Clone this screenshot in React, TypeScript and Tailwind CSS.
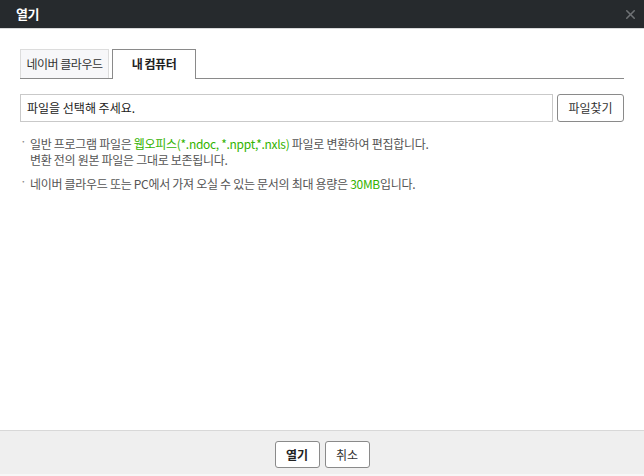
import { X } from "lucide-react";

const font = { fontFamily: '"Noto Sans CJK KR", "Noto Sans", sans-serif' };

export default function App() {
  return (
    <div
      className="flex h-[476px] w-[644px] flex-col bg-white text-[12px] text-[#333]"
      style={font}
    >
      {/* Title bar */}
      <div className="flex h-[29px] shrink-0 items-center justify-between border-b border-[#d7d9da] bg-[#262a2d] pl-[16px] pr-[6px]">
        <span className="text-[13px] font-bold tracking-[-0.5px] text-white">열기</span>
        <X className="h-[15px] w-[15px] text-[#6e7274]" strokeWidth={2.5} />
      </div>

      {/* Body */}
      <div className="flex-1 px-[20px] pt-[21px]">
        {/* Tabs */}
        <div className="flex h-[29px] items-end border-b border-[#8a8a8a]">
          <div className="flex h-[29px] w-[89px] items-center justify-center border border-b-0 border-[#dcdcdc] bg-[#f7f7f9] tracking-[-0.5px] text-[#333]">
            네이버 클라우드
          </div>
          <div className="-mb-px ml-[3px] flex h-[30px] w-[84px] items-center justify-center border border-b-0 border-[#8a8a8a] bg-white pb-px font-bold tracking-[-0.5px] text-[#222]">
            내 컴퓨터
          </div>
        </div>

        {/* File input */}
        <div className="mt-[15px] flex gap-[4px]">
          <div className="flex h-[28px] flex-1 items-center border border-[#c9c9c9] px-[6px] text-[#222]">
            파일을 선택해 주세요.
          </div>
          <button className="h-[28px] w-[67px] rounded-[3px] border border-[#8a8a8a] bg-white text-[#333]">
            파일찾기
          </button>
        </div>

        {/* Notes */}
        <div className="mt-[14px] flex flex-col gap-[8px] leading-[16px] tracking-[-0.3px] text-[#555]">
          <div className="flex">
            <span className="w-[10px] shrink-0 -translate-y-[3px] text-[#888]">·</span>
            <p>
              일반 프로그램 파일은 <span className="text-[#33b300]">웹오피스(*.ndoc, *.nppt,*.nxls)</span> 파일로 변환하여 편집합니다.
              <br />
              변환 전의 원본 파일은 그대로 보존됩니다.
            </p>
          </div>
          <div className="flex">
            <span className="w-[10px] shrink-0 -translate-y-[3px] text-[#888]">·</span>
            <p>
              네이버 클라우드 또는 PC에서 가져 오실 수 있는 문서의 최대 용량은 <span className="text-[#33b300]">30MB</span>입니다.
            </p>
          </div>
        </div>
      </div>

      {/* Footer */}
      <div className="flex h-[44px] shrink-0 items-center justify-center gap-[5px] border-t border-[#d8d8d8] bg-[#efefef] pt-[4px]">
        <button className="h-[27px] w-[45px] rounded-[3px] border border-[#8a8a8a] bg-white font-bold text-[#222]">
          열기
        </button>
        <button className="h-[27px] w-[45px] rounded-[3px] border border-[#8a8a8a] bg-white text-[#333]">
          취소
        </button>
      </div>
      <div className="h-[2px] shrink-0 bg-[#f7f7f7]" />
    </div>
  );
}
